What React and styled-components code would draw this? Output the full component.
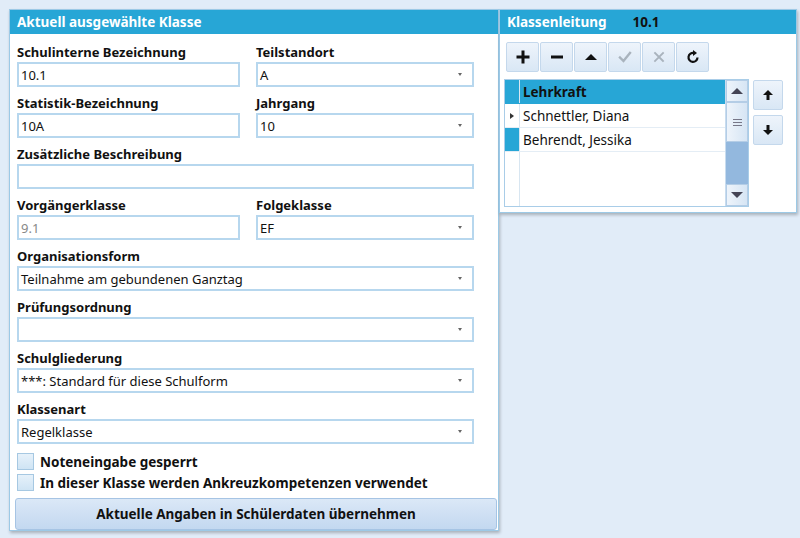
import React from 'react';
import styled, { createGlobalStyle } from 'styled-components';

const Global = createGlobalStyle`
  html, body { margin: 0; background: #e1ecf8; }
  body { font-family: "Noto Sans", "Open Sans", sans-serif; font-size: 13px; color: #111; }
`;

const Page = styled.div`
  display: flex;
  align-items: flex-start;
  padding: 9px 0 0 9px;
  height: 538px;
  box-sizing: border-box;
`;

const Panel = styled.div`
  background: #fff;
  border: 1px solid #9cc9e6;
  box-shadow: 1px 2px 3px rgba(0,0,0,0.25);
  width: ${p => p.$w}px;
  height: ${p => p.$h}px;
  box-sizing: border-box;
  display: flex;
  flex-direction: column;
`;

const Header = styled.div`
  background: #27a6d6;
  color: #fff;
  font-weight: 700;
  font-size: 13.5px;
  height: 24px;
  display: flex;
  align-items: center;
  padding-left: 7px;
  gap: 26px;
  flex-shrink: 0;
`;

const HeaderValue = styled.span`
  color: #111;
`;

const Body = styled.div`
  padding: 9px 0 0 7px;
  display: flex;
  flex-direction: column;
`;

const Row = styled.div`
  display: flex;
  gap: 16px;
`;

const Field = styled.div`
  display: flex;
  flex-direction: column;
  width: ${p => p.$w}px;
  height: 51px;
`;

const Label = styled.div`
  font-weight: 700;
  font-size: 13px;
  height: 19px;
  line-height: 19px;
  white-space: nowrap;
`;

const Input = styled.div`
  height: 25px;
  box-sizing: border-box;
  border: 2px solid #b7d7ee;
  display: flex;
  align-items: center;
  padding: 0 2px;
  font-size: 13px;
  color: ${p => (p.$disabled ? '#888' : '#111')};
  justify-content: space-between;
`;

const Caret = styled.span`
  width: 0; height: 0;
  border-left: 2.5px solid transparent;
  border-right: 2.5px solid transparent;
  border-top: 3px solid #666;
  margin-right: 8px;
`;

const Check = styled.div`
  display: flex;
  align-items: center;
  gap: 6px;
  height: 21px;
  font-weight: 700;
  font-size: 13.5px;
`;

const Box = styled.span`
  width: 15px; height: 15px;
  border: 1px solid #a6c8e2;
  background: linear-gradient(#e6f1fa, #cfe4f4);
`;

const BigButton = styled.div`
  margin: 5px 0 0 -2px;
  width: 480px;
  height: 30px;
  border: 1px solid #a6c4e4;
  border-radius: 3px;
  background: linear-gradient(#dbe8f7, #c3d8f0);
  display: flex;
  align-items: center;
  justify-content: center;
  font-weight: 700;
  font-size: 13.5px;
`;

const Toolbar = styled.div`
  display: flex;
  gap: 1px;
  padding: 8px 0 0 6px;
`;

const ToolBtn = styled.div`
  width: 33px; height: 30px;
  box-sizing: border-box;
  border: 1px solid #c4d8ec;
  border-radius: 2px;
  background: linear-gradient(#eef4fb, #d9e7f5);
  display: flex; align-items: center; justify-content: center;
`;

const GridWrap = styled.div`
  display: flex;
  gap: 4px;
  padding: 7px 0 0 4px;
`;

const Grid = styled.div`
  width: 245px; height: 128px;
  box-sizing: border-box;
  border: 1px solid #a9cde8;
  display: flex;
`;

const Rows = styled.div`
  flex: 1;
  display: flex;
  flex-direction: column;
`;

const GridRow = styled.div`
  display: flex;
  height: 23px;
  border-bottom: 1px solid ${p => (p.$head ? '#27a6d6' : '#e4edf5')};
  background: ${p => (p.$head ? '#27a6d6' : '#fff')};
`;

const RowHead = styled.div`
  width: 14px;
  background: ${p => (p.$none ? '#fff' : '#27a6d6')};
  border-right: 1px solid #d8e6f1;
  display: flex; align-items: center; justify-content: center;
`;

const Cell = styled.div`
  width: 192px;
  padding-left: 3px;
  display: flex; align-items: center;
  font-weight: ${p => (p.$head ? 700 : 400)};
  font-size: 13.5px;
`;

const Scroll = styled.div`
  width: 22px;
  background: #93b8de;
  display: flex;
  flex-direction: column;
  justify-content: space-between;
  border-left: 1px solid #c8dcef;
`;

const ScrollBtn = styled.div`
  height: ${p => p.$h}px;
  background: linear-gradient(90deg, #eef4fb, #d6e5f4);
  border: 1px solid #b4cde6;
  box-sizing: border-box;
  display: flex; flex-direction: column; align-items: center; justify-content: center; gap: 2px;
`;

const Tri = styled.span`
  width: 0; height: 0;
  border-left: 6px solid transparent;
  border-right: 6px solid transparent;
  ${p => (p.$up ? `border-bottom: 6px solid ${p.$c || '#445'};` : `border-top: 6px solid ${p.$c || '#445'};`)}
`;

const Pointer = styled.span`
  width: 0; height: 0;
  border-top: 3px solid transparent;
  border-bottom: 3px solid transparent;
  border-left: 4px solid #333;
`;

const Grip = styled.span`
  width: 9px; height: 1px; background: #778;
`;

const SideBtns = styled.div`
  display: flex; flex-direction: column; gap: 5px; padding-top: 1px;
`;

const SideBtn = styled(ToolBtn)`
  width: 30px; height: 30px;
`;

const Ico = ({ d, color = '#111', w = 2.6 }) => (
  <svg width="14" height="14" viewBox="0 0 14 14"><path d={d} stroke={color} strokeWidth={w} fill="none" strokeLinecap="square" /></svg>
);

const Sel = ({ v }) => (<Input><span>{v}</span><Caret /></Input>);

export default function App() {
  return (
    <Page>
      <Global />
      <Panel $w={490} $h={522}>
        <Header>Aktuell ausgewählte Klasse</Header>
        <Body>
          <Row>
            <Field $w={223}><Label>Schulinterne Bezeichnung</Label><Input>10.1</Input></Field>
            <Field $w={218}><Label>Teilstandort</Label><Sel v="A" /></Field>
          </Row>
          <Row>
            <Field $w={223}><Label>Statistik-Bezeichnung</Label><Input>10A</Input></Field>
            <Field $w={218}><Label>Jahrgang</Label><Sel v="10" /></Field>
          </Row>
          <Field $w={457}><Label>Zusätzliche Beschreibung</Label><Input /></Field>
          <Row>
            <Field $w={223}><Label>Vorgängerklasse</Label><Input $disabled>9.1</Input></Field>
            <Field $w={218}><Label>Folgeklasse</Label><Sel v="EF" /></Field>
          </Row>
          <Field $w={457}><Label>Organisationsform</Label><Sel v="Teilnahme am gebundenen Ganztag" /></Field>
          <Field $w={457}><Label>Prüfungsordnung</Label><Sel v="" /></Field>
          <Field $w={457}><Label>Schulgliederung</Label><Sel v="***: Standard für diese Schulform" /></Field>
          <Field $w={457}><Label>Klassenart</Label><Sel v="Regelklasse" /></Field>
          <Check><Box />Noteneingabe gesperrt</Check>
          <Check><Box />In dieser Klasse werden Ankreuzkompetenzen verwendet</Check>
          <BigButton>Aktuelle Angaben in Schülerdaten übernehmen</BigButton>
        </Body>
      </Panel>
      <Panel $w={298} $h={204}>
        <Header>Klassenleitung<HeaderValue>10.1</HeaderValue></Header>
        <Toolbar>
          <ToolBtn><Ico d="M7 2v10M2 7h10" w={3} /></ToolBtn>
          <ToolBtn><Ico d="M2.5 7h9" w={3} /></ToolBtn>
          <ToolBtn><Tri $up $c="#111" /></ToolBtn>
          <ToolBtn><Ico d="M2 7.5l3.5 3.5L12 3" color="#a9b3bd" w={2.4} /></ToolBtn>
          <ToolBtn><Ico d="M3 3l8 8M11 3l-8 8" color="#a9b3bd" w={1.8} /></ToolBtn>
          <ToolBtn><svg width="16" height="16" viewBox="0 0 16 16"><path d="M12.5 8.5A4.5 4.5 0 1 1 9 4" stroke="#111" strokeWidth="2.2" fill="none" /><path d="M8 1l4 3-4 3z" fill="#111" /></svg></ToolBtn>
        </Toolbar>
        <GridWrap>
          <Grid>
            <Rows>
              <GridRow $head><RowHead /><Cell $head>Lehrkraft</Cell></GridRow>
              <GridRow><RowHead $none><Pointer /></RowHead><Cell>Schnettler, Diana</Cell></GridRow>
              <GridRow><RowHead /><Cell>Behrendt, Jessika</Cell></GridRow>
              <GridRow style={{ flex: 1, borderBottom: 0 }}><RowHead $none /><Cell /></GridRow>
            </Rows>
            <Scroll>
              <div>
                <ScrollBtn $h={22}><Tri $up /></ScrollBtn>
                <ScrollBtn $h={40}><Grip /><Grip /><Grip /></ScrollBtn>
              </div>
              <ScrollBtn $h={22}><Tri /></ScrollBtn>
            </Scroll>
          </Grid>
          <SideBtns>
            <SideBtn><svg width="14" height="14" viewBox="0 0 14 14"><path d="M7 12V4" stroke="#111" strokeWidth="3" /><path d="M2 7l5-5 5 5z" fill="#111" /></svg></SideBtn>
            <SideBtn><svg width="14" height="14" viewBox="0 0 14 14"><path d="M7 2v8" stroke="#111" strokeWidth="3" /><path d="M2 7l5 5 5-5z" fill="#111" /></svg></SideBtn>
          </SideBtns>
        </GridWrap>
      </Panel>
    </Page>
  );
}
